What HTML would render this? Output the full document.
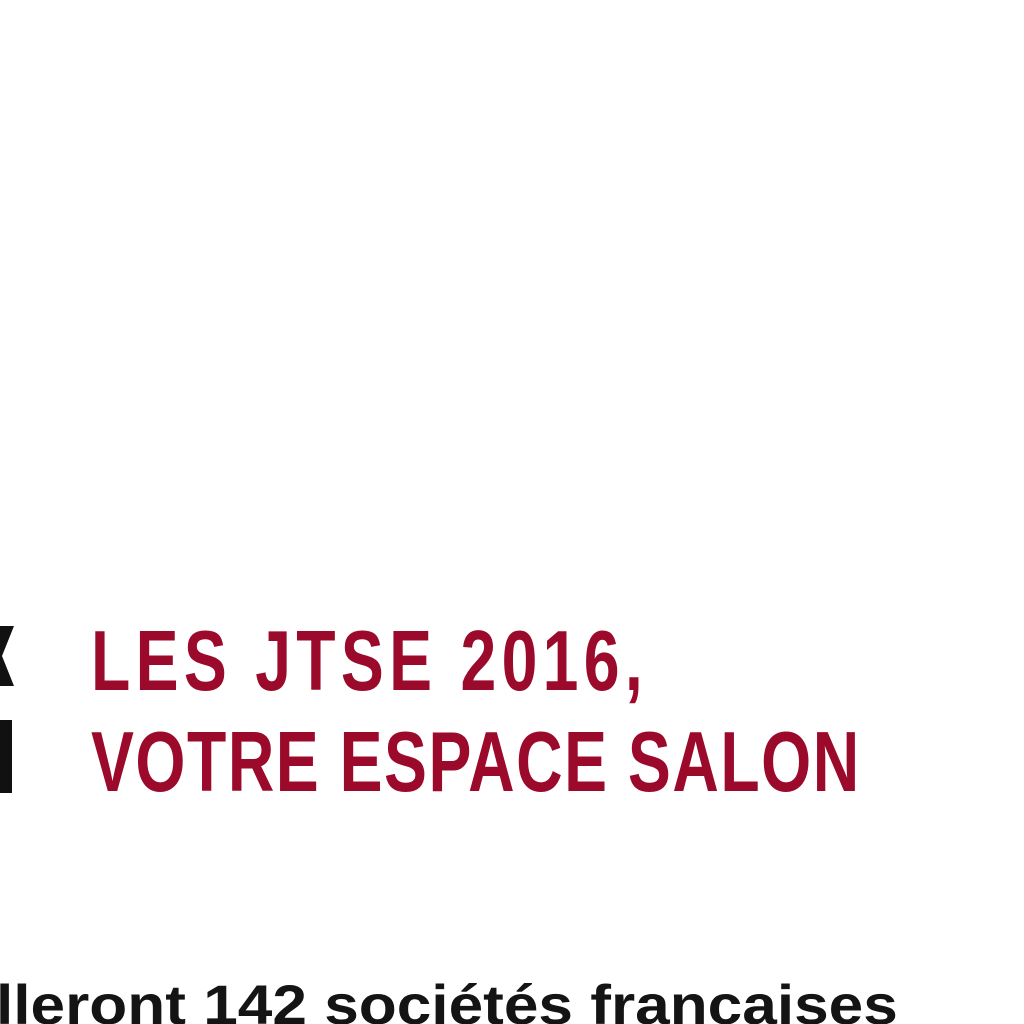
<!DOCTYPE html>
<html><head><meta charset="utf-8"><style>
html,body{margin:0;padding:0;background:#fff;width:1024px;height:1024px;overflow:hidden;position:relative}
.r{position:absolute;left:91px;font-family:"Liberation Sans",sans-serif;font-weight:bold;color:#9c0a2b;font-size:85px;line-height:1;transform-origin:0 0;transform:scaleX(0.757);white-space:nowrap;letter-spacing:2px}
.b{position:absolute;left:-4px;top:977px;font-family:"Liberation Sans",sans-serif;font-weight:bold;color:#141414;font-size:56px;line-height:1;white-space:nowrap;transform-origin:0 0;transform:scaleX(1.11)}
</style></head><body>
<svg style="position:absolute;left:0;top:620px" width="20" height="180">
<polygon points="0,6 14,6 2,36 14,66 0,66" fill="#111"/>
<rect x="0" y="100" width="12" height="73" fill="#111"/>
</svg>
<div class="r" style="top:619px;transform:scaleX(0.757);letter-spacing:7px">LES JTSE 2016,</div>
<div class="r" style="top:720px">VOTRE ESPACE SALON</div>
<div class="b">lleront 142 sociétés francaises</div>
</body></html>
